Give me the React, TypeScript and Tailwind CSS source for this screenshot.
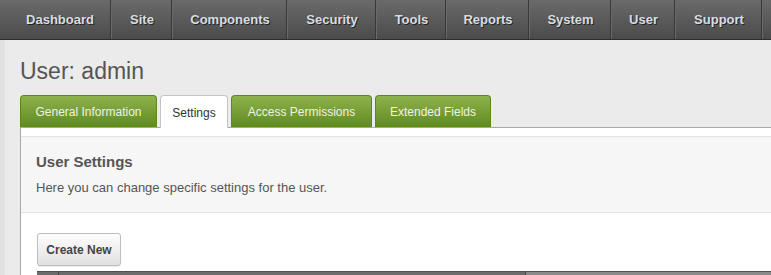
const NAV = [
  { label: 'Dashboard', w: 'w-[111px] pl-[10px]' },
  { label: 'Site', w: 'w-[61px] pl-[2px]' },
  { label: 'Components', w: 'w-[115px] pl-[2px]' },
  { label: 'Security', w: 'w-[89px] pl-[2px]' },
  { label: 'Tools', w: 'w-[70px] pl-[2px]' },
  { label: 'Reports', w: 'w-[83px] pl-[2px]' },
  { label: 'System', w: 'w-[82px] pl-[2px]' },
  { label: 'User', w: 'w-[64px] pl-[2px]' },
  { label: 'Support', w: 'w-[87px] pl-[2px]' },
]

const TABS = [
  { label: 'General Information', w: 'w-[137px]' },
  { label: 'Settings', w: 'w-[68px]' },
  { label: 'Access Permissions', w: 'w-[141px]' },
  { label: 'Extended Fields', w: 'w-[116px]' },
]

export default function App() {
  const active = 'Settings'

  return (
    <div
      className="w-[771px] h-[275px] overflow-hidden bg-[#ebebeb]"
      style={{ fontFamily: '"Liberation Sans", Arial, sans-serif' }}
    >
      {/* Top nav */}
      <nav className="flex h-[40px] bg-gradient-to-b from-[#6a6a6a] to-[#4b4b4b] border-b border-[#2e2e2e]">
        {NAV.map((n) => (
          <a
            key={n.label}
            className={`${n.w} shrink-0 flex items-center justify-center pt-[1px] border-r border-[#383838] shadow-[1px_0_0_#6a6a6a] text-[13px] font-bold text-[#d9dde0] [text-shadow:1px_1px_0_#262626]`}
          >
            {n.label}
          </a>
        ))}
      </nav>

      <div className="flex">
        <div className="w-[5px] shrink-0 bg-[#e2e2e2]" />
        <div className="flex-1 pl-[15px]">
          <h1 className="mt-[17px] text-[23px] leading-[28px] text-[#555]">User: admin</h1>

          {/* Tabs */}
          <div className="mt-[10px] flex gap-[3px] relative z-10 -mb-px">
            {TABS.map((t) =>
              t.label === active ? (
                <div
                  key={t.label}
                  className={`${t.w} h-[33px] pt-[1px] flex items-center justify-center rounded-t-[4px] border border-b-0 border-[#c4c4c4] bg-white text-[12px] text-[#333]`}
                >
                  {t.label}
                </div>
              ) : (
                <div
                  key={t.label}
                  className={`${t.w} h-[32px] pt-[1px] flex items-center justify-center rounded-t-[4px] border border-b-0 border-[#5d861c] bg-gradient-to-b from-[#8fb24c] to-[#5f8b1d] text-[12px] text-[#eef3e4]`}
                >
                  {t.label}
                </div>
              )
            )}
          </div>

          {/* Panel */}
          <div className="mr-[-20px] border-t border-l border-[#a8a8a8] bg-white pt-[8px]">
            <div className="border-t border-b border-[#e2e2e2] bg-[#f6f6f6] px-[15px] pt-[16px] pb-[15px]">
              <h2 className="text-[15px] leading-[18px] font-bold text-[#555]">User Settings</h2>
              <p className="mt-[8px] text-[13px] leading-[18px] text-[#555]">
                Here you can change specific settings for the user.
              </p>
            </div>
            <div className="px-[16px] pt-[20px]">
              <button className="h-[33px] w-[84px] rounded-[3px] border border-[#bdbdbd] bg-gradient-to-b from-[#fdfdfd] to-[#e1e1e1] text-[12px] font-bold text-[#444] shadow-[0_1px_1px_rgba(0,0,0,0.08)]">
                Create New
              </button>
              <div className="mt-[5px] flex h-[12px] border-t border-[#505050]">
                <div className="w-[22px] bg-[#6c6c6c] border-r border-[#444]" />
                <div className="w-[467px] bg-[#6c6c6c] border-r border-[#444]" />
                <div className="flex-1 bg-[#8a8a8a]" />
              </div>
            </div>
          </div>
        </div>
      </div>
    </div>
  )
}
